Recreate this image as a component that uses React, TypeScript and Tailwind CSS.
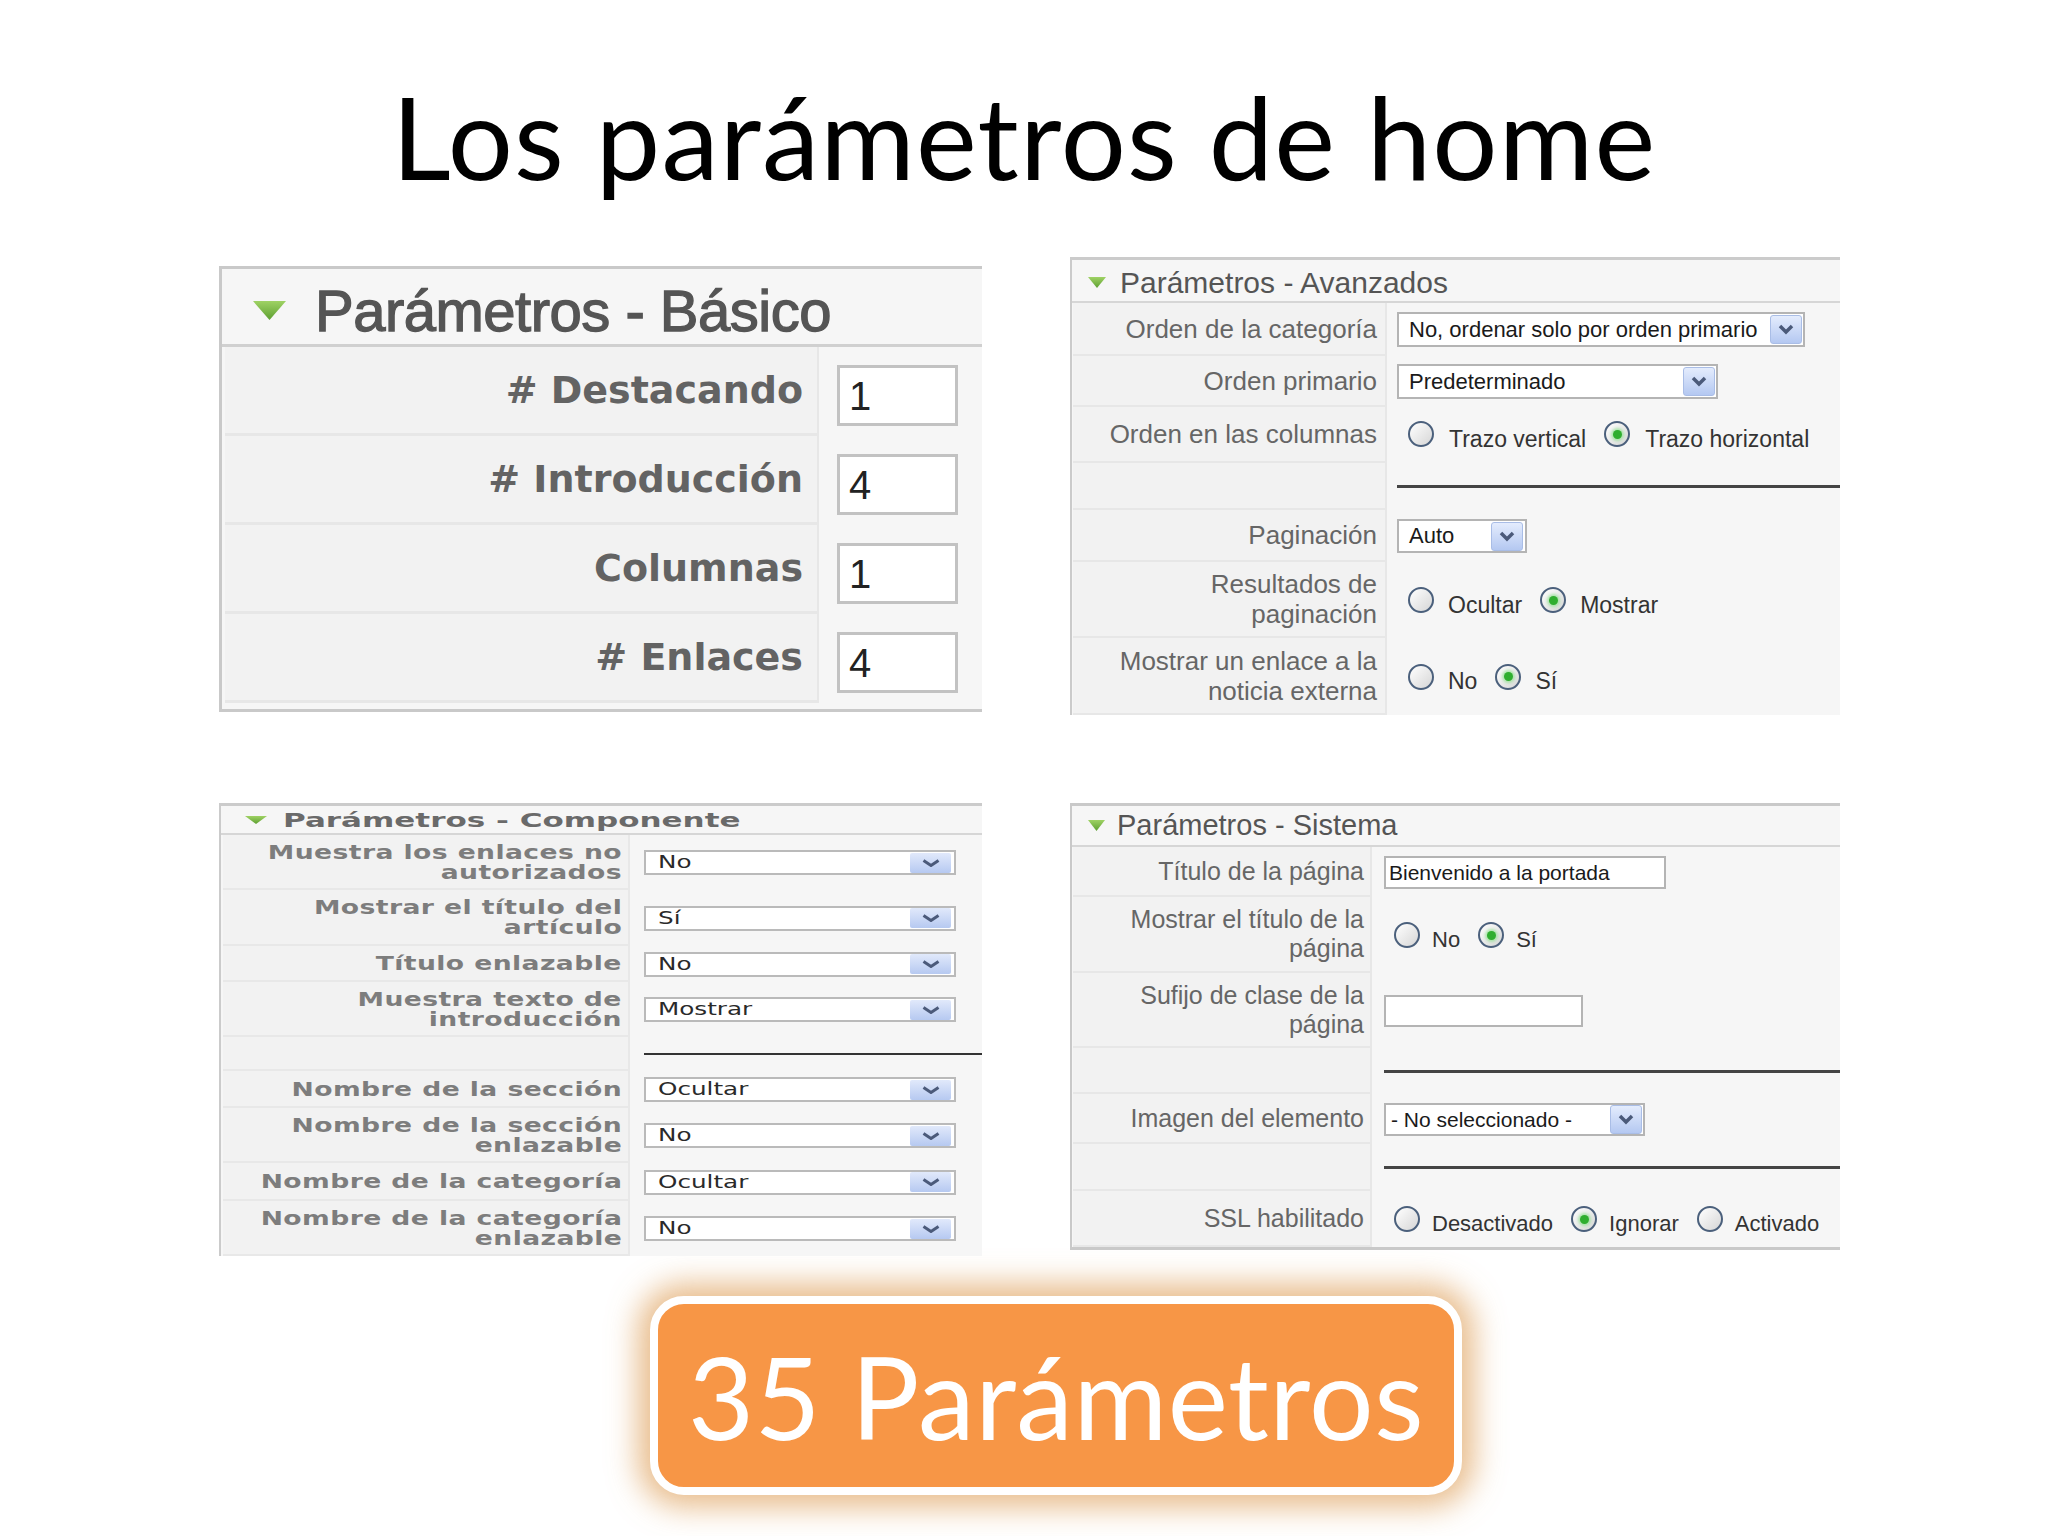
import React from "react";

const LS = "font-['Liberation_Sans',Arial,sans-serif]";
const DV = "font-['DejaVu_Sans',Verdana,sans-serif]";
const LATO = "font-['Lato','Open_Sans',sans-serif]";

function Tri({ w, h }: { w: number; h: number }) {
  return (
    <svg width={w} height={h} viewBox={`0 0 ${w} ${h}`} className="shrink-0">
      <defs>
        <linearGradient id={`g${w}`} x1="0" y1="0" x2="0" y2="1">
          <stop offset="0" stopColor="#9fd264" />
          <stop offset="1" stopColor="#5d9f31" />
        </linearGradient>
      </defs>
      <polygon points={`0,0 ${w},0 ${w / 2},${h}`} fill={`url(#g${w})`} />
    </svg>
  );
}

function Radio({ checked }: { checked?: boolean }) {
  return (
    <span className="mb-[10px] w-[26px] h-[26px] shrink-0 rounded-full border-2 border-[#4b607c] bg-[linear-gradient(135deg,#ffffff,#d6d6d6)] flex items-center justify-center">
      {checked && (
        <span className="w-[9px] h-[9px] rounded-full bg-[#2fae2f] shadow-[0_0_3px_2px_rgba(140,225,140,0.7)]" />
      )}
    </span>
  );
}

function ChevBig() {
  return (
    <span className="w-[32px] h-[29px] shrink-0 rounded-[3px] border border-[#a9bde6] bg-[linear-gradient(#e4ecfd,#b4c8f1)] flex items-center justify-center">
      <svg width="16" height="11" viewBox="0 0 16 11">
        <polyline points="2,2 8,8 14,2" fill="none" stroke="#4b5a7a" strokeWidth="3.5" />
      </svg>
    </span>
  );
}

function ChevWide() {
  return (
    <span className="w-[41px] h-[20px] shrink-0 rounded-[2px] bg-[linear-gradient(#e1e9fb,#b6c9f1)] flex items-center justify-center">
      <svg width="18" height="8" viewBox="0 0 18 8">
        <polyline points="1.5,1.5 9,6.5 16.5,1.5" fill="none" stroke="#4b5a7a" strokeWidth="3" />
      </svg>
    </span>
  );
}

function SelBig({ w, text }: { w: string; text: string }) {
  return (
    <div className={`${w} h-[35px] border-2 border-[#b4b4b4] bg-white flex items-center justify-between pl-[10px] pr-[1px]`}>
      <span className={`${LS} text-[22px] leading-none text-[#1a1a1a] whitespace-nowrap`}>{text}</span>
      <ChevBig />
    </div>
  );
}

function SelComp({ text }: { text: string }) {
  return (
    <div className="w-[312px] h-[25px] border-2 border-[#bababa] bg-white flex items-center justify-between pl-[12px] pr-[3px]">
      <span className={`${DV} inline-block origin-left scale-x-[1.45] text-[17px] leading-none text-[#2a2a2a] whitespace-nowrap`}>{text}</span>
      <ChevWide />
    </div>
  );
}

function Radios({ items, sel, gapText, small }: { items: string[]; sel: number; gapText: string; small?: boolean }) {
  return (
    <div className={`flex items-center ${LS} ${small ? "text-[22px]" : "text-[23px]"} leading-none text-[#333] whitespace-nowrap`}>
      {items.map((t, i) => (
        <React.Fragment key={t}>
          <span className={i === 0 ? "flex items-center" : "flex items-center ml-[18px]"}>
            <Radio checked={i === sel} />
            <span className={gapText}>{t}</span>
          </span>
        </React.Fragment>
      ))}
    </div>
  );
}

/* ---------- Panel 1: Básico ---------- */
function BasicRow({ label, value }: { label: string; value: string }) {
  return (
    <div className="flex h-[89px]">
      <div className={`w-[594px] ml-[3px] bg-[#f2f2f2] border-b-[3px] border-r-[2px] border-[#e7e7e7] flex items-center justify-end pr-[14px] ${DV} font-bold text-[38px] text-[#636363] whitespace-nowrap`}>
        {label}
      </div>
      <div className="flex-1 flex items-center pl-[18px] pt-[8px]">
        <div className={`w-[121px] h-[61px] border-[3px] border-[#c2c2c2] bg-white flex items-center pl-[9px] ${LS} text-[40px] text-[#222]`}>
          {value}
        </div>
      </div>
    </div>
  );
}

function PanelBasic() {
  return (
    <div className="w-[763px] mt-[9px] bg-[#f6f6f6] border-t-[3px] border-l-[3px] border-b-[3px] border-[#c9c9c9] pb-[6px]">
      <div className="h-[78px] border-b-[3px] border-[#d0d0d0] flex items-center pl-[31px] pt-[8px]">
        <Tri w={33} h={19} />
        <span className={`ml-[29px] ${LS} text-[58px] leading-none tracking-[-0.5px] text-[#555] [-webkit-text-stroke:1.3px_#555] whitespace-nowrap`}>
          Parámetros - Básico
        </span>
      </div>
      <BasicRow label="# Destacando" value="1" />
      <BasicRow label="# Introducción" value="4" />
      <BasicRow label="Columnas" value="1" />
      <BasicRow label="# Enlaces" value="4" />
    </div>
  );
}

/* ---------- Panel 2: Avanzados ---------- */
function AdvRow({ h, label, children }: { h: string; label: React.ReactNode; children?: React.ReactNode }) {
  return (
    <div className={`flex ${h}`}>
      <div className={`w-[314px] ml-[1px] bg-[#f2f2f2] border-b-2 border-r-2 border-[#e7e7e7] flex items-center justify-end pr-[8px] text-right ${LS} text-[26px] leading-[30px] text-[#666] whitespace-nowrap`}>
        {label}
      </div>
      <div className="flex-1 flex items-center pl-[10px]">{children}</div>
    </div>
  );
}

function PanelAdv() {
  return (
    <div className="w-[770px] bg-[#f6f6f6] border-t-[3px] border-l-2 border-[#cbcbcb]">
      <div className="h-[43px] border-b-2 border-[#d6d6d6] flex items-center pl-[16px] pt-[4px]">
        <Tri w={18} h={11} />
        <span className={`ml-[14px] ${LS} text-[30px] leading-none text-[#555] whitespace-nowrap`}>Parámetros - Avanzados</span>
      </div>
      <AdvRow h="h-[53px]" label="Orden de la categoría">
        <SelBig w="w-[408px]" text="No, ordenar solo por orden primario" />
      </AdvRow>
      <AdvRow h="h-[51px]" label="Orden primario">
        <SelBig w="w-[321px]" text="Predeterminado" />
      </AdvRow>
      <AdvRow h="h-[56px]" label="Orden en las columnas">
        <div className="pl-[11px] pt-[8px]">
          <Radios items={["Trazo vertical", "Trazo horizontal"]} sel={1} gapText="ml-[15px]" />
        </div>
      </AdvRow>
      <AdvRow h="h-[47px]" label="">
        <div className="w-full h-[3px] bg-[#444]" />
      </AdvRow>
      <AdvRow h="h-[52px]" label="Paginación">
        <div className="w-[130px] h-[34px] border-2 border-[#b4b4b4] bg-white flex items-center justify-between pl-[10px] pr-[2px]">
          <span className={`${LS} text-[22px] leading-none text-[#1a1a1a]`}>Auto</span>
          <ChevBig />
        </div>
      </AdvRow>
      <AdvRow h="h-[76px]" label={<>Resultados de<br />paginación</>}>
        <div className="pl-[11px] pt-[10px]">
          <Radios items={["Ocultar", "Mostrar"]} sel={1} gapText="ml-[14px]" />
        </div>
      </AdvRow>
      <AdvRow h="h-[77px]" label={<>Mostrar un enlace a la<br />noticia externa</>}>
        <div className="pl-[11px] pt-[10px]">
          <Radios items={["No", "Sí"]} sel={1} gapText="ml-[14px]" />
        </div>
      </AdvRow>
    </div>
  );
}

/* ---------- Panel 3: Componente ---------- */
function CompRow({ h, label, children }: { h: string; label: React.ReactNode; children?: React.ReactNode }) {
  return (
    <div className={`flex ${h}`}>
      <div className="w-[407px] ml-[2px] bg-[#f2f2f2] border-b-2 border-r-2 border-[#e8e8e8] flex items-center justify-end pr-[6px]">
        <span className={`inline-block origin-right scale-x-[1.4] text-right ${DV} font-bold text-[19px] leading-[20px] tracking-[0.3px] text-[#7d7d7d] whitespace-nowrap`}>
          {label}
        </span>
      </div>
      <div className="flex-1 flex items-center pl-[14px]">{children}</div>
    </div>
  );
}

function PanelComp() {
  return (
    <div className="w-[763px] bg-[#f6f6f6] border-t-[3px] border-l-2 border-[#cbcbcb]">
      <div className="h-[29px] border-b-2 border-[#d6d6d6] flex items-center pl-[24px]">
        <Tri w={22} h={8} />
        <span className={`ml-[16px] inline-block origin-left scale-x-[1.55] ${DV} font-bold text-[20px] leading-none text-[#6a6a6a] whitespace-nowrap`}>Parámetros - Componente</span>
      </div>
      <CompRow h="h-[55px]" label={<>Muestra los enlaces no<br />autorizados</>}>
        <SelComp text="No" />
      </CompRow>
      <CompRow h="h-[56px]" label={<>Mostrar el título del<br />artículo</>}>
        <SelComp text="Sí" />
      </CompRow>
      <CompRow h="h-[36px]" label="Título enlazable">
        <SelComp text="No" />
      </CompRow>
      <CompRow h="h-[55px]" label={<>Muestra texto de<br />introducción</>}>
        <SelComp text="Mostrar" />
      </CompRow>
      <CompRow h="h-[34px]" label="">
        <div className="w-full h-[2px] bg-[#333]" />
      </CompRow>
      <CompRow h="h-[37px]" label="Nombre de la sección">
        <SelComp text="Ocultar" />
      </CompRow>
      <CompRow h="h-[55px]" label={<>Nombre de la sección<br />enlazable</>}>
        <SelComp text="No" />
      </CompRow>
      <CompRow h="h-[38px]" label="Nombre de la categoría">
        <SelComp text="Ocultar" />
      </CompRow>
      <CompRow h="h-[55px]" label={<>Nombre de la categoría<br />enlazable</>}>
        <SelComp text="No" />
      </CompRow>
    </div>
  );
}

/* ---------- Panel 4: Sistema ---------- */
function SysRow({ h, label, children }: { h: string; label: React.ReactNode; children?: React.ReactNode }) {
  return (
    <div className={`flex ${h}`}>
      <div className={`w-[299px] ml-[1px] bg-[#f2f2f2] border-b-2 border-r-2 border-[#e7e7e7] flex items-center justify-end pr-[6px] text-right ${LS} text-[25px] leading-[29px] text-[#666] whitespace-nowrap`}>
        {label}
      </div>
      <div className="flex-1 flex items-center pl-[12px]">{children}</div>
    </div>
  );
}

function PanelSys() {
  return (
    <div className="w-[770px] bg-[#f6f6f6] border-t-[3px] border-l-2 border-b-[3px] border-[#c9c9c9]">
      <div className="h-[41px] border-b-2 border-[#d6d6d6] flex items-center pl-[16px]">
        <Tri w={17} h={11} />
        <span className={`ml-[12px] ${LS} text-[29px] leading-none text-[#555] whitespace-nowrap`}>Parámetros - Sistema</span>
      </div>
      <SysRow h="h-[50px]" label="Título de la página">
        <div className={`w-[282px] h-[33px] border-2 border-[#b4b4b4] bg-white flex items-center pl-[3px] ${LS} text-[21px] leading-none text-[#1a1a1a] whitespace-nowrap`}>
          Bienvenido a la portada
        </div>
      </SysRow>
      <SysRow h="h-[76px]" label={<>Mostrar el título de la<br />página</>}>
        <div className="pl-[10px] pt-[10px]">
          <Radios items={["No", "Sí"]} sel={1} gapText="ml-[12px]" small />
        </div>
      </SysRow>
      <SysRow h="h-[75px]" label={<>Sufijo de clase de la<br />página</>}>
        <div className="w-[199px] h-[32px] border-2 border-[#b4b4b4] bg-white" />
      </SysRow>
      <SysRow h="h-[46px]" label="">
        <div className="w-full h-[3px] bg-[#444]" />
      </SysRow>
      <SysRow h="h-[50px]" label="Imagen del elemento">
        <div className="w-[261px] h-[33px] border-2 border-[#b4b4b4] bg-white flex items-center justify-between pl-[5px] pr-[1px]">
          <span className={`${LS} text-[21px] leading-none text-[#1a1a1a] whitespace-nowrap`}>- No seleccionado -</span>
          <ChevBig />
        </div>
      </SysRow>
      <SysRow h="h-[47px]" label="">
        <div className="w-full h-[3px] bg-[#444]" />
      </SysRow>
      <SysRow h="h-[56px]" label="SSL habilitado">
        <div className="pl-[10px] pt-[10px]">
          <Radios items={["Desactivado", "Ignorar", "Activado"]} sel={1} gapText="ml-[12px]" small />
        </div>
      </SysRow>
    </div>
  );
}

export default function App() {
  return (
    <div className="w-[2048px] h-[1536px] bg-white overflow-hidden">
      <div className="h-[257px] pt-[78px] text-center">
        <h1 className={`${LATO} text-[115px] leading-none tracking-[1.2px] text-black font-normal`}>Los parámetros de home</h1>
      </div>
      <div className="flex items-start pl-[219px] gap-[88px]">
        <PanelBasic />
        <PanelAdv />
      </div>
      <div className="flex items-start pl-[219px] gap-[88px] mt-[88px]">
        <PanelComp />
        <PanelSys />
      </div>
      <div className="ml-[650px] mt-[40px] w-[812px] h-[199px] rounded-[34px] border-[8px] border-white bg-[#f79646] shadow-[0_0_30px_12px_rgba(222,160,90,0.7)] flex items-center justify-center">
        <span className={`${LATO} text-[114px] leading-none tracking-[0.5px] text-white`}>35 Parámetros</span>
      </div>
    </div>
  );
}
